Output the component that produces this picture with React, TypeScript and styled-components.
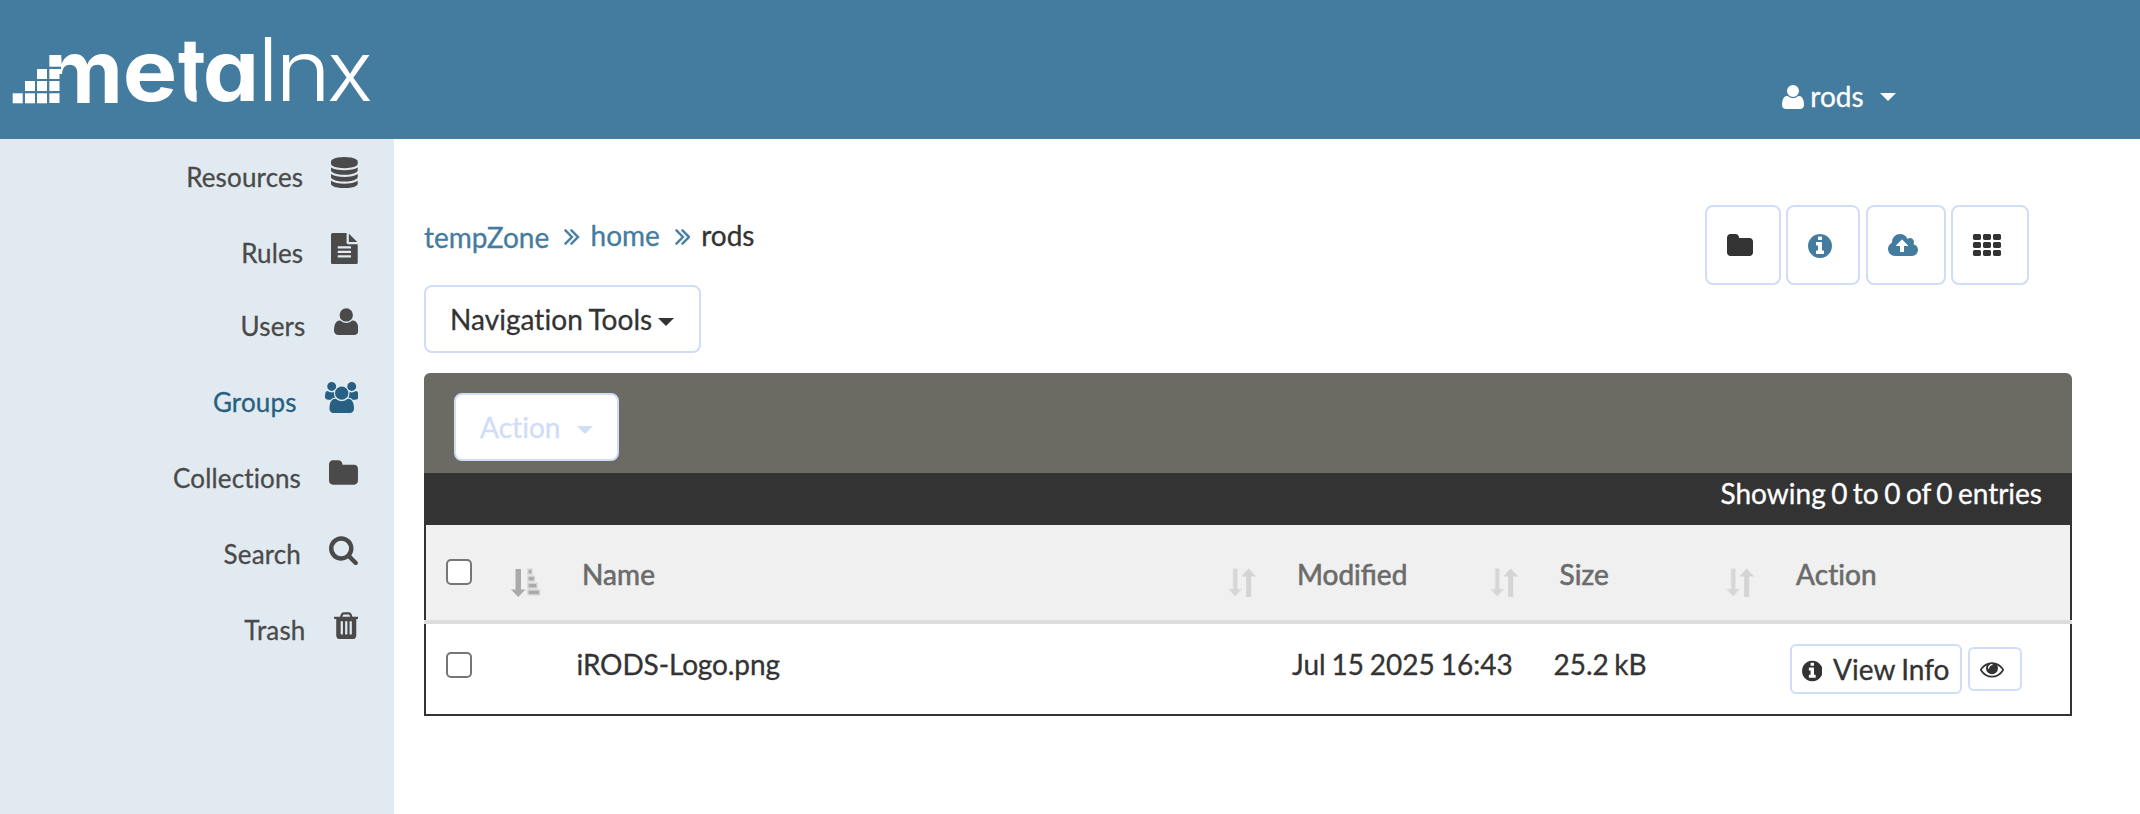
import React from "react";
import styled, { createGlobalStyle, css } from "styled-components";

const GlobalStyle = createGlobalStyle`
  *, *::before, *::after { box-sizing: border-box; }
  html, body { margin: 0; padding: 0; background: #fff; }
  body {
    font-family: Lato, "Liberation Sans", sans-serif;
    font-size: 28px;
    line-height: 40px;
    font-variant-ligatures: none;
    word-spacing: -1.7px;
    -webkit-text-stroke: 0.3px currentColor;
    color: #333;
  }
`;

const lines = (ys: number[], rest: string) => ys.map((y) => `M${rest.replace("Y", String(y))}`).join("");
const diskBand = "768 Yq237 0 443 43t325 127v-170q0 -69 -103 -128t-280 -93.5t-385 -34.5t-385 34.5t-280 93.5t-103 128v170q119 -84 325 -127t443 -43z";
const textLine = "1152 Yv64q0 14 -9 23t-23 9h-704q-14 0 -23 -9t-9 -23v-64q0 -14 9 -23t23 -9h704q14 0 23 9t9 23z";
const slit = (x: number) => `M${x} 160v704q0 14 -9 23t-23 9h-64q-14 0 -23 -9t-9 -23v-704q0 -14 9 -23t23 -9h64q14 0 23 9t9 23z`;
const chevron = (x: number) => `M${x} 576q0 -13 -10 -23l-466 -466q-10 -10 -23 -10t-23 10l-50 50q-10 10 -10 23t10 23l393 393l-393 393q-10 10 -10 23t10 23l50 50q10 10 23 10t23 -10l466 -466q10 -10 10 -23z`;
const tile = (x: number, y: number) => `M${x + 512} ${y + 288}v-192q0 -40 -28 -68t-68 -28h-320q-40 0 -68 28t-28 68v192q0 40 28 68t68 28h320q40 0 68 -28t28 -68z`;

/* Icon outlines: 1792 units per em, y axis pointing up, advance width first. */
const glyphs = {
  database: [1536, lines([768, 0, 384], diskBand) + "M768 1536q208 0 385 -34.5t280 -93.5t103 -128v-128q0 -69 -103 -128t-280 -93.5t-385 -34.5t-385 34.5t-280 93.5t-103 128v128q0 69 103 128t280 93.5t385 34.5z"],
  file: [1536, "M1468 1060q14 -14 28 -36h-472v472q22 -14 36 -28zM992 896h544v-1056q0 -40 -28 -68t-68 -28h-1344q-40 0 -68 28t-28 68v1600q0 40 28 68t68 28h800v-544q0 -40 28 -68t68 -28z" + lines([160, 416, 672], textLine)],
  user: [1408, "M1408 131q0 -120 -73 -189.5t-194 -69.5h-874q-121 0 -194 69.5t-73 189.5q0 53 3.5 103.5t14 109t26.5 108.5t43 97.5t62 81t85.5 53.5t111.5 20q9 0 42 -21.5t74.5 -48t108 -48t133.5 -21.5t133.5 21.5t108 48t74.5 48t42 21.5q61 0 111.5 -20t85.5 -53.5t62 -81t43 -97.5t26.5 -108.5t14 -109t3.5 -103.5zM1088 1024q0 -159 -112.5 -271.5t-271.5 -112.5t-271.5 112.5t-112.5 271.5t112.5 271.5t271.5 112.5t271.5 -112.5t112.5 -271.5z"],
  users: [1920, "M593 640q-162 -5 -265 -128h-134q-82 0 -138 40.5t-56 118.5q0 353 124 353q6 0 43.5 -21t97.5 -42.5t119 -21.5q67 0 133 23q-5 -37 -5 -66q0 -139 81 -256zM1664 3q0 -120 -73 -189.5t-194 -69.5h-874q-121 0 -194 69.5t-73 189.5q0 53 3.5 103.5t14 109t26.5 108.5t43 97.5t62 81t85.5 53.5t111.5 20q10 0 43 -21.5t73 -48t107 -48t135 -21.5t135 21.5t107 48t73 48t43 21.5q61 0 111.5 -20t85.5 -53.5t62 -81t43 -97.5t26.5 -108.5t14 -109t3.5 -103.5zM640 1280q0 -106 -75 -181t-181 -75t-181 75t-75 181t75 181t181 75t181 -75t75 -181zM1344 896q0 -159 -112.5 -271.5t-271.5 -112.5t-271.5 112.5t-112.5 271.5t112.5 271.5t271.5 112.5t271.5 -112.5t112.5 -271.5zM1920 671q0 -78 -56 -118.5t-138 -40.5h-134q-103 123 -265 128q81 117 81 256q0 29 -5 66q66 -23 133 -23q59 0 119 21.5t97.5 42.5t43.5 21q124 0 124 -353zM1792 1280q0 -106 -75 -181t-181 -75t-181 75t-75 181t75 181t181 75t181 -75t75 -181z"],
  folder: [1664, "M1664 928v-704q0 -92 -66 -158t-158 -66h-1216q-92 0 -158 66t-66 158v960q0 92 66 158t158 66h320q92 0 158 -66t66 -158v-32h672q92 0 158 -66t66 -158z"],
  search: [1664, "M1152 704q0 185 -131.5 316.5t-316.5 131.5t-316.5 -131.5t-131.5 -316.5t131.5 -316.5t316.5 -131.5t316.5 131.5t131.5 316.5zM1664 -128q0 -52 -38 -90t-90 -38q-54 0 -90 38l-343 342q-179 -124 -399 -124q-143 0 -273.5 55.5t-225 150t-150 225t-55.5 273.5t55.5 273.5t150 225t225 150t273.5 55.5t273.5 -55.5t225 -150t150 -225t55.5 -273.5q0 -220 -124 -399l343 -343q37 -37 37 -90z"],
  trash: [1408, slit(512) + slit(768) + slit(1024) + "M480 1152h448l-48 117q-7 9 -17 11h-317q-10 -2 -17 -11zM1408 1120v-64q0 -14 -9 -23t-23 -9h-96v-948q0 -83 -47 -143.5t-113 -60.5h-832q-66 0 -113 58.5t-47 141.5v952h-96q-14 0 -23 9t-9 23v64q0 14 9 23t23 9h309l70 167q15 37 54 63t79 26h320q40 0 79 -26t54 -63l70 -167h309q14 0 23 -9t9 -23z"],
  info: [1536, "M1024 160v160q0 14 -9 23t-23 9h-96v512q0 14 -9 23t-23 9h-320q-14 0 -23 -9t-9 -23v-160q0 -14 9 -23t23 -9h96v-320h-96q-14 0 -23 -9t-9 -23v-160q0 -14 9 -23t23 -9h448q14 0 23 9t9 23zM896 1056v160q0 14 -9 23t-23 9h-192q-14 0 -23 -9t-9 -23v-160q0 -14 9 -23t23 -9h192q14 0 23 9t9 23zM1536 640q0 -209 -103 -385.5t-279.5 -279.5t-385.5 -103t-385.5 103t-279.5 279.5t-103 385.5t103 385.5t279.5 279.5t385.5 103t385.5 -103t279.5 -279.5t103 -385.5z"],
  upload: [1920, "M1280 672q0 14 -9 23l-352 352q-9 9 -23 9t-23 -9l-351 -351q-10 -12 -10 -24q0 -14 9 -23t23 -9h224v-352q0 -13 9.5 -22.5t22.5 -9.5h192q13 0 22.5 9.5t9.5 22.5v352h224q13 0 22.5 9.5t9.5 22.5zM1920 384q0 -159 -112.5 -271.5t-271.5 -112.5h-1088q-185 0 -316.5 131.5t-131.5 316.5q0 130 70 240t188 165q-2 30 -2 43q0 212 150 362t362 150q156 0 285.5 -87t188.5 -231q71 62 166 62q106 0 181 -75t75 -181q0 -76 -41 -138q130 -31 213.5 -135.5t83.5 -238.5z"],
  grid: [1792, [0, 640, 1280].map((x) => [0, 512, 1024].map((y) => tile(x, y)).join("")).join("")],
  eye: [1792, "M1664 576q-152 236 -381 353q61 -104 61 -225q0 -185 -131.5 -316.5t-316.5 -131.5t-316.5 131.5t-131.5 316.5q0 121 61 225q-229 -117 -381 -353q133 -205 333.5 -326.5t434.5 -121.5t434.5 121.5t333.5 326.5zM944 960q0 20 -14 34t-34 14q-125 0 -214.5 -89.5t-89.5 -214.5q0 -20 14 -34t34 -14t34 14t14 34q0 86 61 147t147 61q20 0 34 14t14 34zM1792 576q0 -34 -20 -69q-140 -230 -376.5 -368.5t-499.5 -138.5t-499.5 139t-376.5 368q-20 35 -20 69t20 69q140 229 376.5 368t499.5 139t499.5 -139t376.5 -368q20 -35 20 -69z"],
  angles: [979, chevron(595) + chevron(979)],
} as const;

type GlyphName = keyof typeof glyphs;

const GlyphSvg = styled.svg`
  display: block;
  flex: none;
  fill: currentColor;
`;

function Icon({ name, size = 28, className }: { name: GlyphName; size?: number; className?: string }) {
  const [w, d] = glyphs[name];
  return (
    <GlyphSvg className={className} width={(w / 1792) * size} height={size} viewBox={`0 0 ${w} 1792`} aria-hidden>
      <path transform="translate(0 1536) scale(1 -1)" d={d} />
    </GlyphSvg>
  );
}

const Caret = styled.i`
  flex: none;
  margin-top: 5px;
  border-top: 8px solid;
  border-left: 8px solid transparent;
  border-right: 8px solid transparent;
`;

/* ---------- header ---------- */

const Header = styled.header`
  display: flex;
  justify-content: space-between;
  height: 139px;
  background: #447c9f;
  color: #fff;
`;

const LogoSvg = styled.svg`
  display: block;
  fill: #fff;
  font-family: Inter, sans-serif;
  font-size: 84px;
  font-feature-settings: "cv11";
  -webkit-text-stroke: 0;
`;

const logoSquares = [
  [12.7, 93.3], [25, 93.3], [37, 93.3],
  [25, 81], [37, 81],
  [37, 69],
];

const letters: { ch: string; x: number; y: number; sx: number; sy: number; weight: number; clip?: string }[] = [
  { ch: "m", x: 43.9, y: 103, sx: 1.03, sy: 1.05, weight: 700 },
  { ch: "e", x: 122.7, y: 101.3, sx: 1.09, sy: 1.02, weight: 700 },
  { ch: "t", x: 178, y: 101, sx: 0.91, sy: 1.04, weight: 700, clip: "url(#stem)" },
  { ch: "a", x: 202.8, y: 101.3, sx: 1.065, sy: 1.02, weight: 700 },
  { ch: "l", x: 257.3, y: 101, sx: 1.1, sy: 1.05, weight: 300 },
  { ch: "n", x: 275, y: 101, sx: 1.14, sy: 1.01, weight: 300 },
  { ch: "x", x: 327, y: 101, sx: 1.03, sy: 1, weight: 300 },
];

function Logo() {
  return (
    <LogoSvg width="390" height="139" viewBox="0 0 390 139" role="img" aria-label="metalnx">
      <clipPath id="stem">
        <rect x="-2" y="-70" width="44" height="36" />
        <rect x="-2" y="-34" width="22.500" height="36" />
      </clipPath>
      {logoSquares.map(([x, y]) => (
        <rect key={`${x}-${y}`} x={x} y={y} width="10" height="10" />
      ))}
      {letters.map((l) => (
        <text key={l.ch} fontWeight={l.weight} clipPath={l.clip} transform={`translate(${l.x} ${l.y}) scale(${l.sx} ${l.sy})`}>
          {l.ch}
        </text>
      ))}
      <g fill="#447c9f">
        <rect x="47" y="66.700" width="14" height="2.300" />
        <rect x="47" y="79" width="17" height="2" />
        <rect x="47" y="91" width="17" height="2.300" />
        <rect x="59.500" y="74" width="5" height="30" />
      </g>
    </LogoSvg>
  );
}

const Account = styled.div`
  display: flex;
  align-items: flex-start;
  margin: 76px 244px 0 0;
`;

const AccountName = styled.span`
  margin: 0 16.400px 0 6.600px;
`;

const AccountIcon = styled(Icon)`
  margin-top: 7px;
`;

const AccountCaret = styled(Caret)`
  margin-top: 17px;
`;

/* ---------- sidebar ---------- */

const Body = styled.div`
  display: flex;
  height: 675px;
`;

const Sidebar = styled.nav`
  flex: none;
  width: 394px;
  padding: 18px 36px 0 0;
  background: #e2eaf1;
`;

const NavItem = styled.a<{ $active?: boolean; $height?: number }>`
  display: flex;
  justify-content: flex-end;
  align-items: flex-start;
  gap: 28px;
  height: ${(p) => p.$height ?? 76}px;
  font-size: 26px;
  letter-spacing: 0.15px;
  color: ${(p) => (p.$active ? "#276082" : "#4a4a4a")};
`;

const nav: { label: string; icon: GlyphName; active?: boolean; height?: number }[] = [
  { label: "Resources", icon: "database" },
  { label: "Rules", icon: "file", height: 73 },
  { label: "Users", icon: "user" },
  { label: "Groups", icon: "users", active: true },
  { label: "Collections", icon: "folder" },
  { label: "Search", icon: "search" },
  { label: "Trash", icon: "trash" },
];

/* ---------- content ---------- */

const Main = styled.main`
  flex: none;
  width: 1678px;
  padding: 66px 0 0 30px;
`;

const TopRow = styled.div`
  display: flex;
  justify-content: space-between;
  align-items: flex-start;
  height: 80px;
  padding-right: 43px;
`;

const Breadcrumb = styled.div`
  display: flex;
  padding-top: 10px;
`;

const Crumb = styled.a<{ $current?: boolean; $drop?: number }>`
  padding-top: ${(p) => p.$drop ?? 0}px;
  color: ${(p) => (p.$current ? "#333" : "#447c9f")};
`;

const CrumbSeparator = styled(Icon)`
  margin: 7px 11px 0 15px;
  color: #447c9f;
  stroke: currentColor;
  stroke-width: 24px;
`;

const Toolbar = styled.div`
  display: flex;
  gap: 5.300px;
`;

const outline = css`
  border: 2px solid #cfddf6;
  background: #fff;
  font: inherit;
  font-variant-ligatures: none;
  word-spacing: -0.800px;
  color: #333;
`;

const ToolButton = styled.button<{ $width: number; $blue?: boolean }>`
  ${outline}
  display: flex;
  align-items: center;
  width: ${(p) => p.$width}px;
  height: 80px;
  padding: 2px 0 0 20px;
  border-radius: 8px;
  color: ${(p) => (p.$blue ? "#447c9f" : "#333")};
`;

const MenuButton = styled.button<{ $muted?: boolean; $width: number; $gap: number }>`
  ${outline}
  display: flex;
  align-items: center;
  gap: ${(p) => p.$gap}px;
  width: ${(p) => p.$width}px;
  height: 68px;
  padding: 0 0 0 24px;
  border-radius: 8px;
  letter-spacing: 0.05px;
  color: ${(p) => (p.$muted ? "#cfddf6" : "#333")};
`;

const Panel = styled.section`
  margin-top: 20px;
`;

const ActionBar = styled.div`
  height: 100px;
  padding: 20px 30px;
  border-radius: 6px 6px 0 0;
  background: #6b6b63;
`;

const Summary = styled.div`
  height: 52px;
  padding-right: 30px;
  background: #333;
  color: #fff;
  text-align: right;
`;

const Table = styled.div`
  border-bottom: 2px solid #333;
`;

const Row = styled.div<{ $head?: boolean }>`
  display: grid;
  grid-template-columns: 78px ${(p) => (p.$head ? 78 : 72.5)}px 715px 262px 236px 1fr;
  height: ${(p) => (p.$head ? 95 : 90)}px;
  border: solid #333;
  border-width: 0 2px;
  background: ${(p) => (p.$head ? "#f0f0f0" : "#fff")};
  color: ${(p) => (p.$head ? "#6b6b6b" : "#333")};
`;

const HeadRule = styled.div`
  height: 4px;
  background: #ddd;
`;

const Cell = styled.div<{ $top: number; $left?: number }>`
  display: flex;
  justify-content: space-between;
  align-items: flex-start;
  padding: ${(p) => p.$top}px 0 0 ${(p) => p.$left ?? 0}px;
  white-space: nowrap;
`;

const HeadText = styled.span`
  font-variant-ligatures: common-ligatures;
  -webkit-text-stroke: 0.6px currentColor;
`;

const HeadTextSpaced = styled(HeadText)`
  font-variant-ligatures: none;
  letter-spacing: 0.1px;
`;

const FileName = styled.span`
  letter-spacing: -0.120px;
`;

const DateText = styled.span`
  margin-left: 0.500px;
  word-spacing: -1.300px;
`;

const Checkbox = styled.input`
  appearance: none;
  width: 26px;
  height: 26px;
  margin: 0;
  border: 2px solid #767676;
  border-radius: 5px;
  background: #fff;
`;

const SortSvg = styled.svg`
  display: block;
  margin: 14px 40px 0 0;
`;

function SortBoth() {
  return (
    <SortSvg width="30" height="30" viewBox="0 0 30 30">
      <path fill="#d6d6d6" stroke="#e6e6e6" d="M6 .5h4.500v20.500h4.500L8.200 28.500 1.500 21H6z" />
      <path fill="#d4d4d4" d="M21.700 .5l7.500 8h-5V29h-5V8.500h-5z" />
    </SortSvg>
  );
}

function SortAscending() {
  return (
    <svg width="30" height="30" viewBox="0 0 30 30">
      <path fill="#aaa" d="M4.500 1h5.500v20.500h4.500L7.200 29 0 21.500h4.500z" />
      <g fill="#aaa" stroke="#d4d4d4" strokeWidth="1.400">
        <rect x="17" y="1.200" width="4" height="4.800" />
        <rect x="17" y="8.200" width="6.500" height="4.800" />
        <rect x="17" y="15.200" width="9" height="4.800" />
        <rect x="17" y="22" width="11.500" height="4.800" />
      </g>
    </svg>
  );
}

const SmallButton = styled.button<{ $width: number; $height: number }>`
  ${outline}
  display: flex;
  align-items: center;
  width: ${(p) => p.$width}px;
  height: ${(p) => p.$height}px;
  padding: 0 0 0 10px;
  gap: 11px;
  border-radius: 6px;
`;

const LoweredIcon = styled(Icon)`
  margin-top: 4px;
`;

const RowActions = styled.div`
  display: flex;
  align-items: center;
  gap: 6px;
`;

export default function App() {
  return (
    <>
      <GlobalStyle />
      <Header>
        <Logo />
        <Account>
          <AccountIcon name="user" />
          <AccountName>rods</AccountName>
          <AccountCaret />
        </Account>
      </Header>
      <Body>
        <Sidebar>
          {nav.map((item) => (
            <NavItem key={item.label} $active={item.active} $height={item.height}>
              <span>{item.label}</span>
              <Icon name={item.icon} size={31.2} />
            </NavItem>
          ))}
        </Sidebar>
        <Main>
          <TopRow>
            <Breadcrumb>
              <Crumb $drop={2}>tempZone</Crumb>
              <CrumbSeparator name="angles" />
              <Crumb>home</Crumb>
              <CrumbSeparator name="angles" />
              <Crumb $current>rods</Crumb>
            </Breadcrumb>
            <Toolbar>
              <ToolButton $width={76}><Icon name="folder" /></ToolButton>
              <ToolButton $width={74} $blue><Icon name="info" /></ToolButton>
              <ToolButton $width={80} $blue><Icon name="upload" /></ToolButton>
              <ToolButton $width={78}><Icon name="grid" /></ToolButton>
            </Toolbar>
          </TopRow>
          <MenuButton $width={277} $gap={6}>Navigation Tools<Caret /></MenuButton>
          <Panel>
            <ActionBar>
              <MenuButton $width={165} $gap={16} $muted>Action<Caret /></MenuButton>
            </ActionBar>
            <Summary>Showing 0 to 0 of 0 entries</Summary>
            <Table>
              <Row $head>
                <Cell $top={34} $left={20}><Checkbox type="checkbox" /></Cell>
                <Cell $top={43} $left={7}><SortAscending /></Cell>
                <Cell $top={29}><HeadTextSpaced>Name</HeadTextSpaced><SortBoth /></Cell>
                <Cell $top={29}><HeadText>Modified</HeadText><SortBoth /></Cell>
                <Cell $top={29} $left={0.5}><HeadTextSpaced>Size</HeadTextSpaced><SortBoth /></Cell>
                <Cell $top={29} $left={1}><HeadTextSpaced>Action</HeadTextSpaced></Cell>
              </Row>
              <HeadRule />
              <Row>
                <Cell $top={28} $left={20}><Checkbox type="checkbox" /></Cell>
                <Cell $top={20} />
                <Cell $top={20}><FileName>iRODS-Logo.png</FileName></Cell>
                <Cell $top={20}><DateText>Jul 15 2025 16:43</DateText></Cell>
                <Cell $top={20}>25.2 kB</Cell>
                <Cell $top={20}>
                  <RowActions>
                    <SmallButton $width={172} $height={50}><LoweredIcon name="info" size={24} />View Info</SmallButton>
                    <SmallButton $width={54} $height={44}><Icon name="eye" size={24} /></SmallButton>
                  </RowActions>
                </Cell>
              </Row>
            </Table>
          </Panel>
        </Main>
      </Body>
    </>
  );
}
